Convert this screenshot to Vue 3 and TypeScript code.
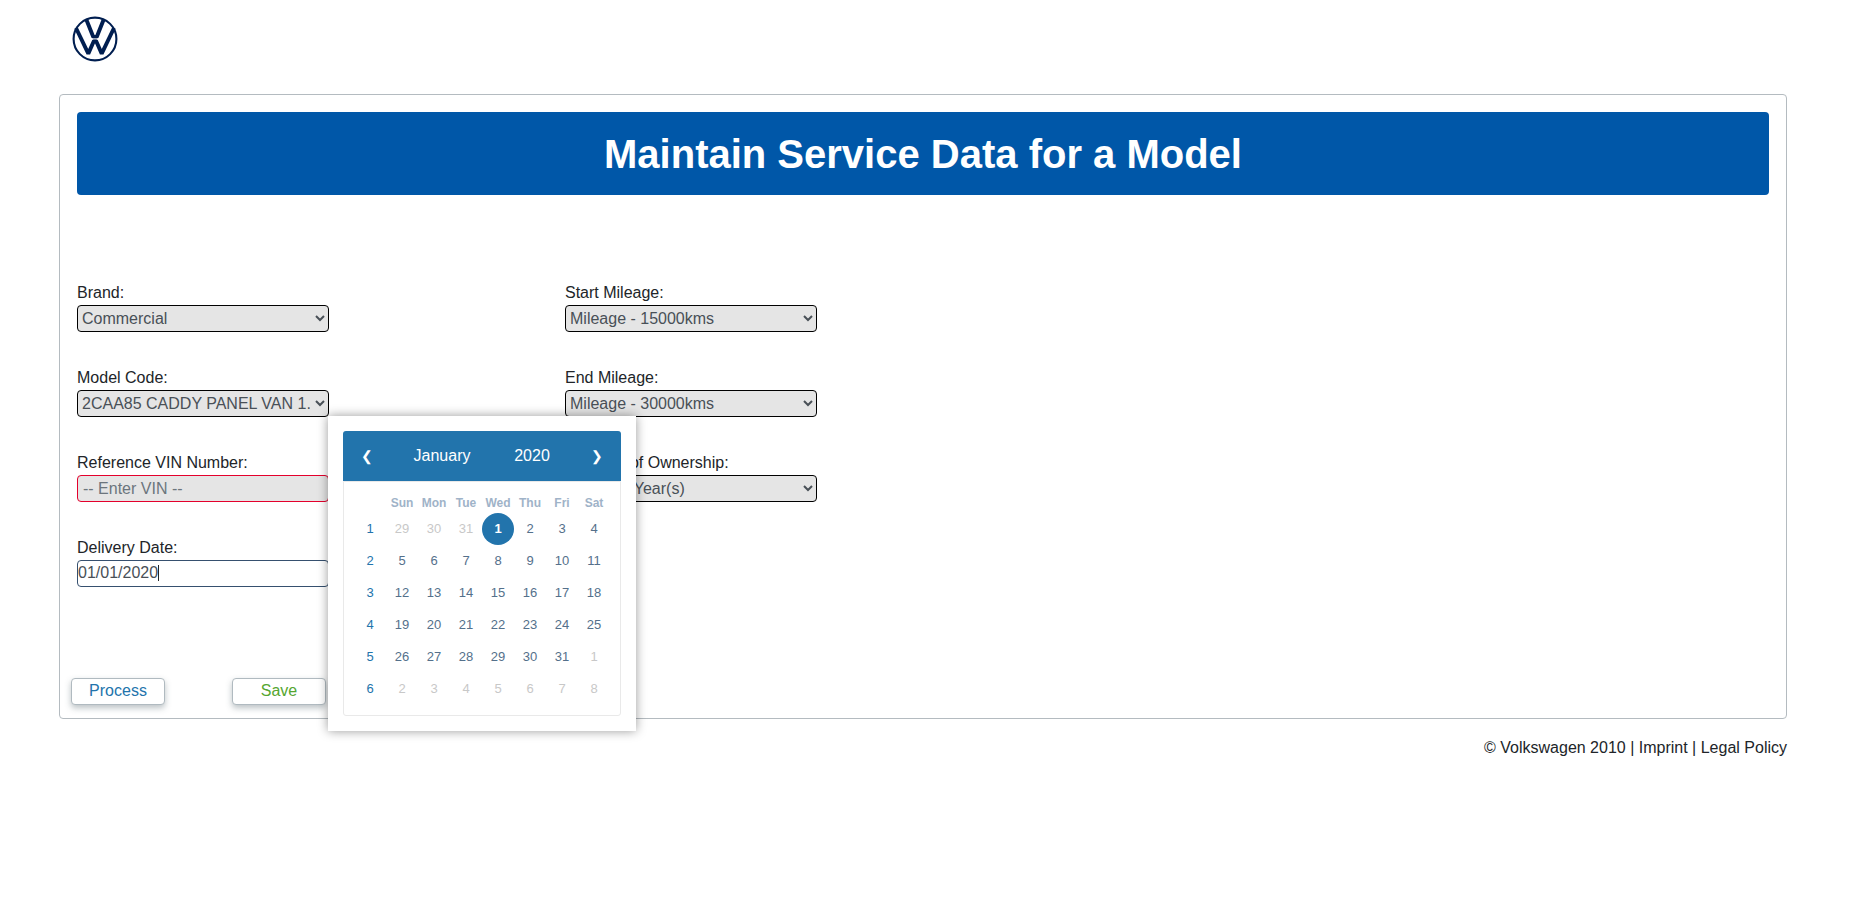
<script setup lang="ts">
import { ref } from 'vue'

interface Day {
  day: number
  muted: boolean
  selected: boolean
}

const weekdays = ['Sun', 'Mon', 'Tue', 'Wed', 'Thu', 'Fri', 'Sat']
const brand = ref('Commercial')
const model = ref('2CAA85 CADDY PANEL VAN 1.6')
const vin = ref('')
const startMileage = ref('Mileage - 15000kms')
const endMileage = ref('Mileage - 30000kms')
const period = ref('Period 1 Year(s)')
const deliveryDate = ref('01/01/2020')

const weeks: Day[][] = Array.from({ length: 6 }, (_, w) =>
  Array.from({ length: 7 }, (_, d) => {
    const date = new Date(2020, 0, w * 7 + d - 2)
    const inMonth = date.getMonth() === 0 && date.getFullYear() === 2020
    return { day: date.getDate(), muted: !inMonth, selected: inMonth && date.getDate() === 1 }
  }),
)
</script>

<template>
  <div class="page">
    <header class="brand-bar">
      <svg class="logo" viewBox="0 0 46 46" role="img" aria-label="Volkswagen">
        <circle cx="23" cy="23" r="21.4" fill="none" stroke="#001e50" stroke-width="2.1" />
        <path
          d="M14.3 3.500 21.300 21H24.700L31.700 3.500M4 12 16.300 37.600 22 24.800H24L29.700 37.600 42 12"
          fill="none"
          stroke="#001e50"
          stroke-width="3.900"
          stroke-linejoin="bevel"
        />
        <path d="M19 22.900H27" stroke="#fff" stroke-width="1" />
      </svg>
    </header>

    <main class="panel">
      <h1 class="title">Maintain Service Data for a Model</h1>

      <form class="form" @submit.prevent>
        <div class="fields">
          <div class="column">
            <div class="field">
              <label for="brand">Brand:</label>
              <select id="brand" v-model="brand" class="control">
                <option>Commercial</option>
              </select>
            </div>
            <div class="field">
              <label for="model">Model Code:</label>
              <select id="model" v-model="model" class="control">
                <option>2CAA85 CADDY PANEL VAN 1.6</option>
              </select>
            </div>
            <div class="field">
              <label for="vin">Reference VIN Number:</label>
              <input id="vin" v-model="vin" type="text" class="control invalid" placeholder="-- Enter VIN --" />
            </div>
            <div class="field">
              <label for="delivery">Delivery Date:</label>
              <div class="date-box">
                <input id="delivery" v-model="deliveryDate" type="text" class="control date" />
                <span class="caret" aria-hidden="true"></span>
                <div class="popup">
                  <div class="calendar-head">
                    <button type="button" class="nav" aria-label="Previous month">❮</button>
                    <button type="button" class="month">January</button>
                    <button type="button" class="year">2020</button>
                    <button type="button" class="nav" aria-label="Next month">❯</button>
                  </div>
                  <div class="calendar-body">
                    <table class="calendar">
                      <thead>
                        <tr>
                          <td></td>
                          <th v-for="name in weekdays" :key="name" scope="col">{{ name }}</th>
                        </tr>
                      </thead>
                      <tbody>
                        <tr v-for="(week, i) in weeks" :key="i">
                          <td class="week">{{ i + 1 }}</td>
                          <td v-for="(d, j) in week" :key="j">
                            <button type="button" class="day" :class="{ muted: d.muted, selected: d.selected }">
                              {{ d.day }}
                            </button>
                          </td>
                        </tr>
                      </tbody>
                    </table>
                  </div>
                </div>
              </div>
            </div>
          </div>

          <div class="column">
            <div class="field">
              <label for="start">Start Mileage:</label>
              <select id="start" v-model="startMileage" class="control">
                <option>Mileage - 15000kms</option>
              </select>
            </div>
            <div class="field">
              <label for="end">End Mileage:</label>
              <select id="end" v-model="endMileage" class="control">
                <option>Mileage - 30000kms</option>
              </select>
            </div>
            <div class="field">
              <label for="period">Duration of Ownership:</label>
              <select id="period" v-model="period" class="control">
                <option>Period 1 Year(s)</option>
              </select>
            </div>
          </div>
        </div>

        <div class="actions">
          <button type="button" class="action process">Process</button>
          <button type="button" class="action save">Save</button>
        </div>
      </form>
    </main>

    <footer class="footer">
      © Volkswagen 2010 | <a href="#imprint">Imprint</a> | <a href="#legal">Legal Policy</a>
    </footer>
  </div>
</template>

<style>
body {
  background: #fff;
}
</style>

<style scoped>
* {
  box-sizing: border-box;
}

.page {
  padding: 16px 84px 24px 59px;
  font-family: 'Liberation Sans', Arial, sans-serif;
  font-size: 16px;
  line-height: 24px;
  color: #212529;
}

button,
input,
select {
  font: inherit;
}

.brand-bar {
  height: 78px;
  padding-left: 13px;
}

.logo {
  display: block;
  width: 46px;
  height: 46px;
}

.panel {
  border: 1px solid #b4bbc0;
  border-radius: 4px;
  padding: 17px 17px 13px;
}

.title {
  margin: 0;
  padding: 18px 12px 16px;
  border-radius: 4px;
  background: #0057a8;
  color: #fff;
  font-size: 40px;
  line-height: 49px;
  font-weight: 700;
  text-align: center;
}

.form {
  padding-top: 86px;
}

.fields {
  display: grid;
  grid-template-columns: 488px 488px;
}

.column {
  display: flex;
  flex-direction: column;
  gap: 34px;
}

.field {
  width: 252px;
}

.field label {
  display: block;
  height: 24px;
}

.control {
  display: block;
  width: 100%;
  height: 27px;
  margin: 0;
  padding: 0;
  border: 1px solid #000;
  border-radius: 4px;
  background-color: #e5e5e5;
  color: #495057;
  outline: none;
}

select.control {
  padding-right: 2px;
}

input.control {
  padding: 0 5px;
}

.control.invalid {
  border-color: #e4002c;
}

.control.invalid::placeholder {
  color: #6c757d;
  opacity: 1;
}

.control.date {
  padding: 0 0 2px;
  border-color: #36506f;
  background: #fff;
}

.date-box {
  position: relative;
}

.caret {
  position: absolute;
  left: 81px;
  top: 5px;
  width: 1px;
  height: 16px;
  background: #212529;
}

.popup {
  position: absolute;
  left: 251px;
  top: -144px;
  z-index: 10;
  width: 308px;
  padding: 15px;
  background: #fff;
  box-shadow: 0 0 10px rgba(0, 0, 0, 0.4);
}

.calendar-head {
  display: flex;
  align-items: center;
  height: 50px;
  padding: 0 8px;
  border-radius: 3px 3px 0 0;
  background: #2274ac;
}

.calendar-head button {
  padding: 0;
  border: 0;
  background: none;
  color: #fff;
  font-weight: 500;
}

.calendar-head .nav {
  width: 32px;
  font-size: 14px;
}

.calendar-head .month {
  width: 118px;
}

.calendar-head .year {
  flex: 1;
  text-align: center;
  padding-right: 18px;
}

.calendar-body {
  padding: 10px;
  border: 1px solid #e9e9e9;
  border-radius: 0 0 3px 3px;
}

.calendar {
  width: 100%;
  table-layout: fixed;
  border-collapse: collapse;
  font-size: 13px;
  text-align: center;
}

.calendar th,
.calendar td {
  height: 32px;
  padding: 0;
  line-height: 16px;
}

.calendar thead th,
.calendar thead td {
  height: 21px;
  color: #9fb3c8;
  font-weight: 700;
}

.calendar thead th {
  font-size: 12px;
}

.calendar .week {
  color: #2274ac;
}

.day {
  display: block;
  width: 32px;
  height: 32px;
  padding: 0;
  border: 0;
  border-radius: 50%;
  background: none;
  color: #54708b;
}

.day.muted {
  color: #c8c8c8;
}

.day.selected {
  background: #2274ac;
  color: #fff;
  font-weight: 700;
}

.actions {
  display: flex;
  gap: 67px;
  margin: 91px 0 0 -6px;
}

.action {
  width: 94px;
  height: 27px;
  padding: 0 0 2px;
  border: 1px solid #b0bac0;
  border-radius: 4px;
  background: #fff;
  box-shadow: 0 3px 6px rgba(60, 80, 90, 0.35);
}

.process {
  color: #2274ac;
}

.save {
  color: #55a630;
}

.footer {
  margin-top: 17px;
  text-align: right;
}

.footer a {
  color: inherit;
  text-decoration: none;
}
</style>
